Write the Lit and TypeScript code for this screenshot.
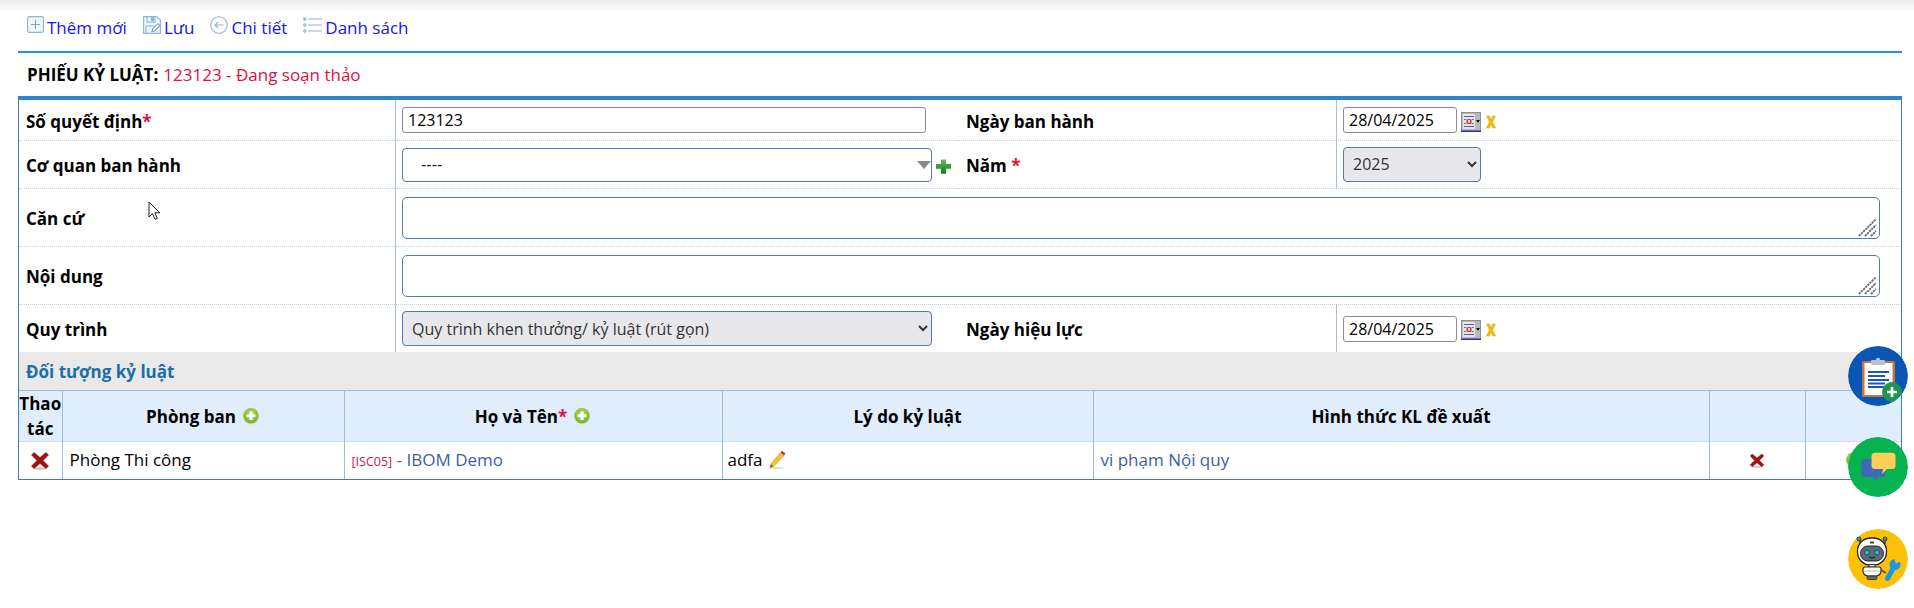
import { LitElement, html, css, svg } from "lit";
import { customElement } from "lit/decorators.js";

const redX = (s: number) => html`<svg width=${s} height=${s} viewBox="0 0 20 20"><ellipse cx="10" cy="18.5" rx="7" ry="1.4" fill="#ccc"/><path d="M4 2.5 10 7.5 16 2.5 18.5 5 13 10.5 18.5 16 16 18.5 10 13.5 4 18.5 1.5 16 7 10.5 1.5 5Z" fill="#a01414" stroke="#8a0f0f" stroke-width=".6"/></svg>`;
const greenPlusRound = html`<svg class="rplus" width="18" height="18" viewBox="0 0 18 18"><defs><radialGradient id="gp" cx=".5" cy=".35" r=".7"><stop offset="0" stop-color="#b4dc5a"/><stop offset="1" stop-color="#6aae2a"/></radialGradient></defs><circle cx="9" cy="9.4" r="8" fill="#c9d5bd"/><circle cx="9" cy="8.6" r="7.6" fill="url(#gp)"/><path d="M7.4 4.6h3.2v2.6h2.8v3h-2.8v2.8H7.4v-2.8H4.6v-3h2.8z" fill="#fff"/></svg>`;
const calIcon = html`<svg class="ci" width="20" height="20" viewBox="0 0 20 20"><rect x=".5" y=".5" width="19" height="19" fill="#b9b9b9" stroke="#8e8ea8"/><rect x="0" y="18.500" width="20" height="1.500" fill="#2a2ab8"/><rect x="2" y="2" width="12" height="15" fill="#e6e6e6"/><path d="M3 4.500h10M3 14.500h10" stroke="#5a5ab0"/><path d="M3 7.500h2.500M10.500 7.500h2.500M3 11.500h2.500M10.500 11.500h2.500" stroke="#777"/><circle cx="8" cy="9.500" r="2" fill="none" stroke="#c02020" stroke-width="1.200"/><path d="M15 8h4l-2 2.800z" fill="#111"/></svg>`;
const yellowX = html`<svg class="ci yx" width="10" height="14" viewBox="0 0 12 15" preserveAspectRatio="none"><path d="M.6 1h3.600L6 5l1.800-4h3.600L8 7.500l3.600 6.500H8L6 10l-2 4H.4L4 7.500Z" fill="#f0bc14" stroke="#d9a406" stroke-width=".5"/></svg>`;
const greenPlus = html`<svg width="17" height="17" viewBox="0 0 17 17"><defs><linearGradient id="pl" x1="0" y1="0" x2="0" y2="1"><stop offset="0" stop-color="#5cc05c"/><stop offset="1" stop-color="#137a13"/></linearGradient></defs><path d="M6 1.500h5v4.600h5v4.600h-5v5H6v-5H1V6.100h5z" fill="url(#pl)"/></svg>`;
const pencil = html`<svg class="pen" width="18" height="20" viewBox="0 0 18 20"><ellipse cx="8" cy="18" rx="8" ry="1.200" fill="#ddd"/><path d="M3 13.500 12.500 2.500 16 5.500 6 16.500 2 17.500Z" fill="#f3c036" stroke="#d89e1c" stroke-width=".5"/><path d="M12.500 2.500 14 .8 17.500 3.600 16 5.500Z" fill="#c8324a"/><path d="M2 17.500 3 14.500 5 16.200Z" fill="#444"/></svg>`;
const grip = html`<svg class="grip" width="20" height="20" viewBox="0 0 20 20" stroke="#667" stroke-width="1.800" stroke-dasharray="2.200 .8"><path d="M1 19 18 2M7 19 18 8M13 19 18 14"/></svg>`;

const iconStroke = "#8bb6d8";
const iPlus = html`<svg width="17" height="17" viewBox="0 0 17 17" fill="none" stroke=${iconStroke} stroke-width="1.100"><rect x=".6" y=".6" width="15.800" height="15.800" rx="1.500" fill="#eef5fb"/><path d="M8.500 4v9M4 8.500h9" stroke="#7ba7cc"/></svg>`;
const iSave = html`<svg width="18" height="18" viewBox="0 0 18 18" fill="none" stroke=${iconStroke} stroke-width="1.100"><path d="M.6.6h13l3.800 3.500v13.300H.6Z" fill="#eef5fb"/><path d="M4 .8v5.400h8V.8M3 17V10h8"/><rect x="8.500" y="1.800" width="2" height="3" fill=${iconStroke}/><path d="M9 15.500l.8-2.800 5-5 2 2-5 5z" fill="#fff" stroke="#6d9cc4"/></svg>`;
const iBack = html`<svg width="18" height="18" viewBox="0 0 18 18" fill="none" stroke=${iconStroke} stroke-width="1.100"><circle cx="9" cy="9" r="8.200"/><path d="M13.500 9H5M8 6 5 9l3 3"/></svg>`;
const iList = html`<svg width="19" height="16" viewBox="0 0 19 16" fill="none" stroke=${iconStroke} stroke-width="1.200"><circle cx="1.800" cy="2" r="1.100"/><circle cx="1.800" cy="8" r="1.100"/><circle cx="1.800" cy="14" r="1.100"/><path d="M5 2h14M5 8h14M5 14h14"/></svg>`;

const clipboard = svg`<rect x="14" y="15" width="33" height="36" rx="1.500" fill="#c8733c"/><rect x="16.500" y="17" width="28" height="32" fill="#fff"/><rect x="23" y="14" width="14" height="5" rx="1" fill="#b9c2cc"/><circle cx="30" cy="14" r="2.200" fill="#b9c2cc"/><path d="M20 26h21M20 30h17M20 34h21M20 37.500h17M20 41h17" stroke="#1f55b8" stroke-width="1.800"/><circle cx="44" cy="46" r="10" fill="#1e9455"/><path d="M44 41v10M39 46h10" stroke="#fff" stroke-width="2.600"/>`;
const chat = svg`<path d="M16.500 22h18a3 3 0 0 1 3 3v12a3 3 0 0 1-3 3h-5l-1 4-4-4h-8a3 3 0 0 1-3-3V25a3 3 0 0 1 3-3z" fill="#3f6ab8"/><path d="M27 15.700h17a3.500 3.500 0 0 1 3.500 3.500v9.300a3.500 3.500 0 0 1-3.500 3.500h-5l-5 5 1-5h-8a3.500 3.500 0 0 1-3.500-3.500v-9.300a3.500 3.500 0 0 1 3.500-3.500z" fill="#fdcf58"/>`;
const robot = svg`<path d="M12 10v5M37 10v5" stroke="#222" stroke-width="1.200"/><circle cx="11" cy="10" r="2" fill="#3f8fcb" stroke="#222" stroke-width=".8"/><circle cx="37" cy="10" r="2" fill="#3f8fcb" stroke="#222" stroke-width=".8"/><rect x="9.500" y="9" width="29" height="27" rx="13" fill="#fff" stroke="#222" stroke-width="1.300"/><path d="M22.500 12.500h3l.6 2h-4.200z" fill="#333"/><rect x="12.500" y="17" width="23" height="15" rx="7.500" fill="#5b6b78" stroke="#222"/><circle cx="19" cy="23.500" r="2.300" fill="#28c3e6" stroke="#123" stroke-width=".6"/><circle cx="29" cy="23.500" r="2.300" fill="#28c3e6" stroke="#123" stroke-width=".6"/><path d="M21 28q3 2 6 0" stroke="#111" fill="none"/><rect x="21" y="35.500" width="6" height="2.500" fill="#ddd" stroke="#222" stroke-width=".8"/><path d="M17 38h14a2 2 0 0 1 2 2v2a5 5 0 0 1-5 5h-8a5 5 0 0 1-5-5v-2a2 2 0 0 1 2-2z" fill="#fff" stroke="#222" stroke-width="1.200"/><path d="M15.500 42h17" stroke="#bbb"/><rect x="19" y="47" width="10" height="3.500" rx="1.500" fill="#666" stroke="#222" stroke-width=".8"/><path d="M33 41l5 3" stroke="#555" stroke-width="2"/><path d="M39.500 49.500 46 38" stroke="#1e96e6" stroke-width="5" stroke-linecap="round"/><circle cx="47" cy="35.500" r="5.500" fill="#1e96e6"/><path d="M46 28.500l1.800 6 5.500-2.500-1-4.500z" fill="#ffc107"/>`;

@customElement("app-root")
export class AppRoot extends LitElement {
  static styles = css`
    :host { display: block; position: relative; height: 608px; overflow: hidden; background: #fff;
      font-family: "Open Sans", sans-serif; font-size: 17px; color: #000; }
    .shadow { height: 13px; background: linear-gradient(#ececec, #fff); margin-bottom: -13px; }
    .wrap { padding: 0 12px 0 18px; }
    .toolbar { box-sizing: border-box; display: flex; align-items: center; height: 53px; padding: 3px 0 0 9px; border-bottom: 2px solid #2196e8; color: #1414f0; font-size: 17px; position: relative; }
    .tool { display: flex; align-items: center; margin-right: 16px; gap: 3px; }
    .tool svg { margin-top: -5px; }
    .title { height: 43px; display: flex; align-items: center; padding-left: 9px; font-size: 17px; font-weight: 700; gap: 5px; }
    .title span { font-weight: 400; color: #e0103c; }
    .panel { border: 1px solid #3d7fb5; border-top: 4px solid #2a86cf; }
    .form { display: grid; grid-template-columns: 376px 563px 378px 1fr; grid-template-rows: 41px 48px 58px 58px 47px; }
    .form > div { display: flex; align-items: center; border-bottom: 1px dotted #c4d2de; min-width: 0; }
    .form > div.last { border-bottom: none; }
    .lab { padding: 2px 0 0 7px; font-weight: 700; font-size: 17px; }
    .lab2 { padding: 2px 0 0 8px; font-weight: 700; font-size: 17px; }
    .val { border-left: 1px solid #aebfd0; padding-left: 6px; gap: 4px; }
    .span3 { grid-column: 2 / 5; padding-right: 21px; }
    .req { color: #e0103c; font-weight: 700; }
    input { box-sizing: border-box; height: 26px; font: 16px "Open Sans", sans-serif; padding: 0 5px; border: 1px solid #8a8a9c; border-radius: 3px; color: #000; background: #fff; }
    .i1 { width: 524px; }
    .i2 { width: 114px; }
    .ci { margin-top: 3px; }
    .yx { margin-left: 1px; }
    .combo { box-sizing: border-box; width: 530px; height: 34px; border: 1px solid #5a78a8; border-radius: 4px; display: flex; align-items: center; justify-content: space-between; padding-left: 18px; font: 16px "Liberation Sans", sans-serif; color: #222; background: #fff; }
    .combo i { width: 0; height: 0; border: 7px solid transparent; border-top: 8px solid #8a8a8a; border-bottom: 0; }
    .after { margin: 3px -22px 0 -1px; display: flex; }
    select { box-sizing: border-box; height: 35px; border: 1px solid #5a78a8; border-radius: 4px; background-color: #e8e8ec; color: #333; font: 16px "Open Sans", sans-serif; padding-left: 5px; }
    .s1 { width: 138px; margin-top: -1px; }
    .s2 { width: 530px; }
    .ta { position: relative; width: 100%; }
    textarea { display: block; box-sizing: border-box; width: 100%; height: 42px; border: 1px solid #5a78a8; border-radius: 5px; background: #fff; margin: 0; resize: none; }
    .grip { position: absolute; right: 2px; bottom: 2px; }
    .sect { height: 38px; background: #e9e9e9; display: flex; align-items: center; padding-left: 7px; font-weight: 700; color: #1a6fa8; font-size: 17px; border-bottom: 1px solid #9dbdd8; }
    table { border-collapse: collapse; table-layout: fixed; width: 100%; }
    th { background: #dfedfd; height: 49px; padding: 0; font-weight: 700; font-size: 17px; border-left: 1px solid #9dbdd8; border-bottom: 1px dotted #c4d2de; line-height: 25px; }
    th:first-child, td:first-child { border-left: none; }
    td { height: 34px; padding: 0 7px 3px; border-left: 1px solid #9dbdd8; font-size: 17px; white-space: nowrap; }
    td:nth-child(4) { padding-left: 5px; }
    .thin { display: inline-flex; align-items: center; justify-content: center; gap: 6px; }
    td.c { text-align: center; padding: 0 0 4px; height: 33px; }
    td.c:last-child { padding-left: 2px; }
    td svg { vertical-align: middle; }
    .pen { margin: -1px 0 0 1px; }
    .link { color: #3a5fa8; }
    .code { color: #e0103c; font-size: 12.500px; }
    .fab { position: absolute; left: 1848px; width: 60px; height: 60px; border-radius: 50%; display: block; }
    .cursor { position: absolute; left: 148px; top: 201px; }
  `;

  render() {
    return html`
      <div class="shadow"></div>
      <div class="wrap">
        <div class="toolbar">
          <div class="tool">${iPlus}<span>Thêm mới</span></div>
          <div class="tool">${iSave}<span>Lưu</span></div>
          <div class="tool">${iBack}<span>Chi tiết</span></div>
          <div class="tool">${iList}<span>Danh sách</span></div>
        </div>
        <div class="title">PHIẾU KỶ LUẬT: <span>123123 - Đang soạn thảo</span></div>
        <div class="panel">
          <div class="form">
            <div class="lab">Số quyết định<span class="req">*</span></div>
            <div class="val"><input class="i1" .value=${"123123"} /></div>
            <div class="lab2">Ngày ban hành</div>
            <div class="val"><input class="i2" .value=${"28/04/2025"} />${calIcon}${yellowX}</div>

            <div class="lab">Cơ quan ban hành</div>
            <div class="val"><div class="combo"><span>----</span><i></i></div><span class="after">${greenPlus}</span></div>
            <div class="lab2">Năm&nbsp;<span class="req">*</span></div>
            <div class="val"><select class="s1"><option>2025</option></select></div>

            <div class="lab">Căn cứ</div>
            <div class="val span3"><div class="ta"><textarea></textarea>${grip}</div></div>

            <div class="lab">Nội dung</div>
            <div class="val span3"><div class="ta"><textarea></textarea>${grip}</div></div>

            <div class="lab last">Quy trình</div>
            <div class="val last"><select class="s2"><option>Quy trình khen thưởng/ kỷ luật (rút gọn)</option></select></div>
            <div class="lab2 last">Ngày hiệu lực</div>
            <div class="val last"><input class="i2" .value=${"28/04/2025"} />${calIcon}${yellowX}</div>
          </div>
          <div class="sect">Đối tượng kỷ luật</div>
          <table>
            <colgroup><col style="width:43px"/><col style="width:282px"/><col style="width:378px"/><col style="width:371px"/><col style="width:616px"/><col style="width:96px"/><col /></colgroup>
            <thead><tr>
              <th>Thao tác</th>
              <th><span class="thin">Phòng ban ${greenPlusRound}</span></th>
              <th><span class="thin">Họ và Tên<span class="req" style="margin-left:-6px">*</span> ${greenPlusRound}</span></th>
              <th>Lý do kỷ luật</th>
              <th>Hình thức KL đề xuất</th>
              <th></th><th></th>
            </tr></thead>
            <tbody><tr>
              <td class="c">${redX(20)}</td>
              <td>Phòng Thi công</td>
              <td class="link"><span class="code">[ISC05]</span> - IBOM Demo</td>
              <td>adfa ${pencil}</td>
              <td class="link">vi phạm Nội quy</td>
              <td class="c">${redX(16)}</td>
              <td class="c">${greenPlusRound}</td>
            </tr></tbody>
          </table>
        </div>
      </div>
      <svg class="fab" style="top:346px" viewBox="0 0 60 60"><circle cx="30" cy="30" r="30" fill="#0a56b4"/>${clipboard}</svg>
      <svg class="fab" style="top:437px" viewBox="0 0 60 60"><circle cx="30" cy="30" r="30" fill="#07b350"/>${chat}</svg>
      <svg class="fab" style="top:529px" viewBox="0 0 60 60"><circle cx="30" cy="30" r="30" fill="#ffc107"/>${robot}</svg>
      <svg class="cursor" width="14" height="20" viewBox="0 0 14 20"><path d="M1 1v15l3.500-3.300 2.500 5.600 2.300-1-2.500-5.500h5z" fill="#fff" stroke="#222" stroke-width="1"/></svg>
    `;
  }
}
